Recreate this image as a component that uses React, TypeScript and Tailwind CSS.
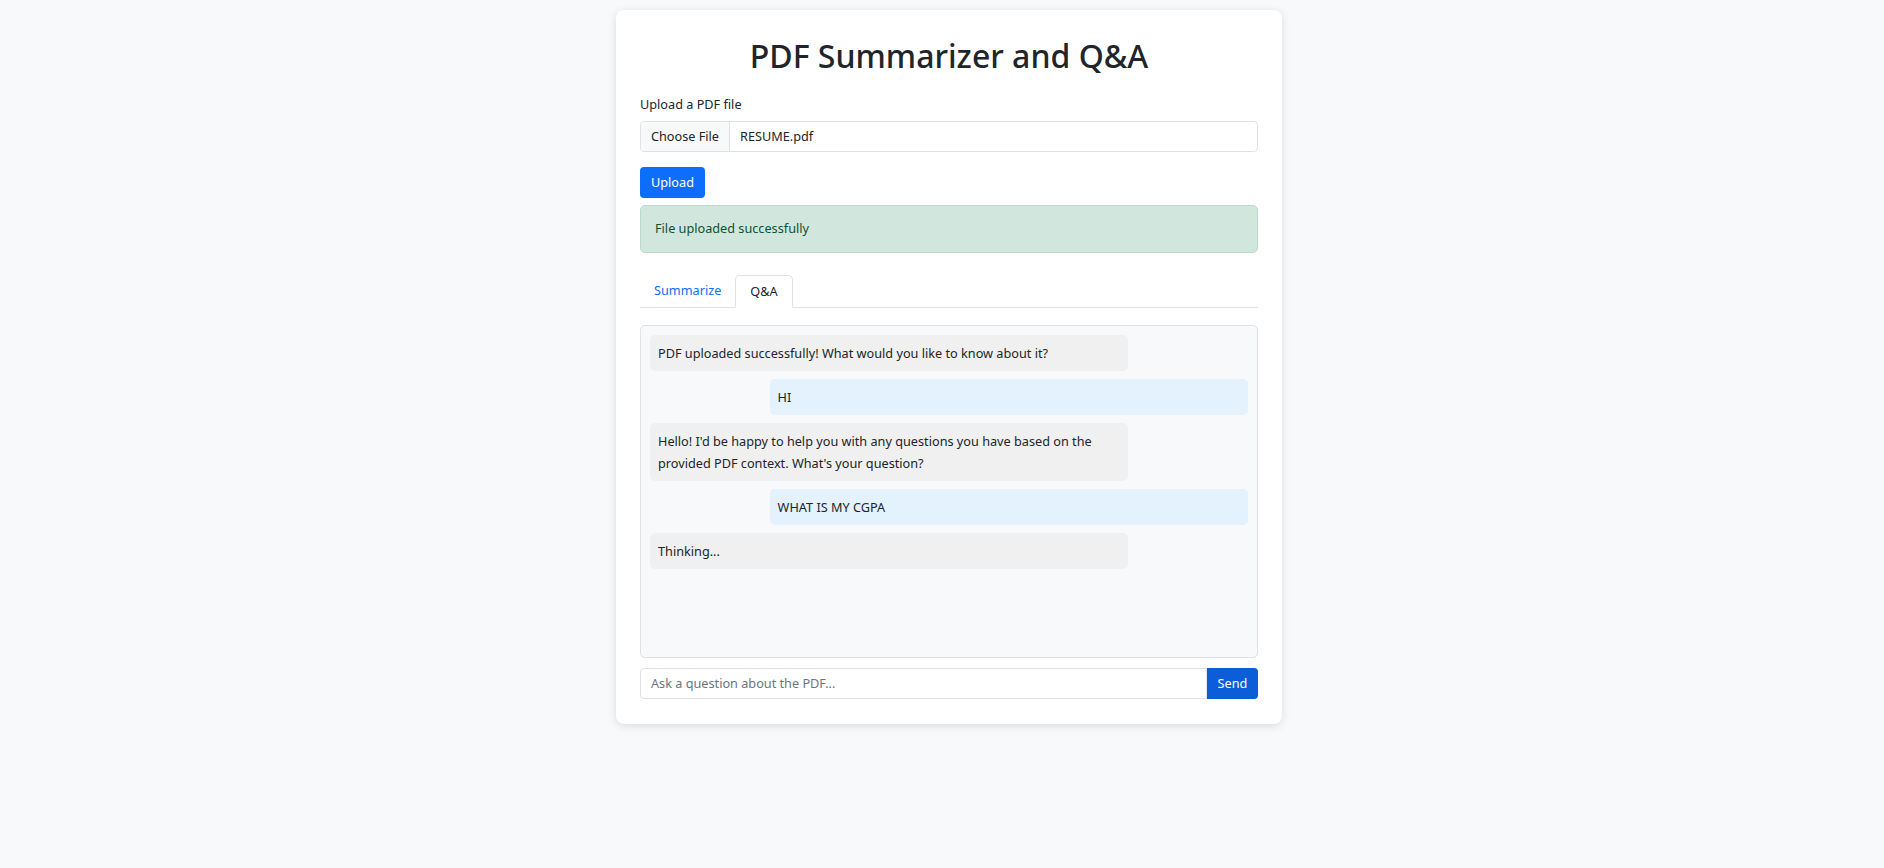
import React from "react";

const font = { fontFamily: '"Segoe UI", "Noto Sans", "Liberation Sans", sans-serif' };

function Bubble({ user, children }: { user?: boolean; children: React.ReactNode }) {
  return (
    <div className={user ? "flex justify-end" : "flex justify-start"}>
      <div
        className={
          "w-[80%] rounded-[5px] px-[8px] py-[7px] text-[12.7px] leading-[22px] text-[#212529] " +
          (user ? "bg-[#e3f2fd]" : "bg-[#f0f0f0]")
        }
      >
        {children}
      </div>
    </div>
  );
}

export default function App() {
  return (
    <div className="min-h-[868px] w-full bg-[#f8f9fa]" style={font}>
      <div className="flex justify-center pt-[10px]">
        <div className="ml-[14px] w-[666px] rounded-[8px] bg-white px-[24px] pb-[25px] pt-[22px] shadow-[0_2px_8px_rgba(0,0,0,0.12)]">
          <h1 className="text-center text-[32px] font-medium leading-[48px] text-[#212529]">
            PDF Summarizer and Q&amp;A
          </h1>
          <div className="mt-[14px] text-[12.7px] leading-[21px] text-[#212529]">Upload a PDF file</div>
          <div className="mt-[6px] flex h-[31px] items-stretch overflow-hidden rounded-[4px] border border-[#dee2e6] text-[12.7px] text-[#212529]">
            <div className="flex items-center border-r border-[#dee2e6] bg-[#f8f9fa] px-[10px]">Choose File</div>
            <div className="flex items-center px-[10px]">RESUME.pdf</div>
          </div>
          <button className="mt-[15px] flex h-[31px] items-center rounded-[4px] bg-[#0d6efd] px-[11px] text-[12.7px] text-white">
            Upload
          </button>
          <div className="mt-[7px] flex h-[48px] items-center rounded-[5px] border border-[#badbcc] bg-[#d1e7dd] px-[14px] text-[12.7px] text-[#0f5132]">
            File uploaded successfully
          </div>
          <div className="mt-[22px] flex border-b border-[#dee2e6] text-[12.7px]">
            <div className="flex h-[32px] items-center px-[14px] text-[#0d6efd]">Summarize</div>
            <div className="-mb-px flex h-[33px] items-center rounded-t-[5px] border border-b-white border-[#dee2e6] bg-white px-[14px] text-[#212529]">
              Q&amp;A
            </div>
          </div>
          <div className="mt-[17px] flex h-[333px] flex-col gap-[8px] rounded-[5px] border border-[#dee2e6] bg-[#f8f9fa] p-[9px]">
            <Bubble>PDF uploaded successfully! What would you like to know about it?</Bubble>
            <Bubble user>HI</Bubble>
            <Bubble>
              Hello! I'd be happy to help you with any questions you have based on the provided PDF context. What's your question?
            </Bubble>
            <Bubble user>WHAT IS MY CGPA</Bubble>
            <Bubble>Thinking...</Bubble>
          </div>
          <div className="mt-[10px] flex h-[31px] text-[12.7px]">
            <div className="flex flex-1 items-center rounded-l-[4px] border border-[#dee2e6] px-[10px] text-[#6c757d]">
              Ask a question about the PDF...
            </div>
            <button className="flex w-[51px] items-center justify-center rounded-r-[4px] bg-[#0b5ed7] text-white">Send</button>
          </div>
        </div>
      </div>
    </div>
  );
}
